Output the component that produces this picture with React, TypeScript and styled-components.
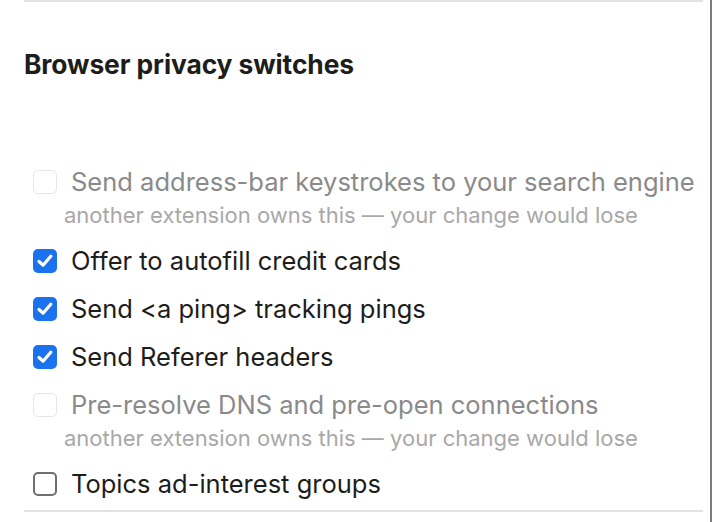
import React from "react";
import styled, { createGlobalStyle } from "styled-components";

const Global = createGlobalStyle`
  html, body { margin: 0; padding: 0; background: #ffffff; }
  body { font-family: Inter, "Noto Sans", sans-serif; color: #1d1d1b; }
`;

const Frame = styled.div`
  width: 712px;
  height: 522px;
  box-sizing: border-box;
  border-right: 2px solid #7b7b7b;
  padding: 0 7px 0 24px;
  overflow: hidden;
`;

const Section = styled.section`
  border-top: 2px solid #e3e3e0;
  border-bottom: 2px solid #e3e3e0;
  display: flex;
  flex-direction: column;
`;

const Heading = styled.h2`
  margin: 47px 0 0 0;
  font-size: 26.4px;
  line-height: 30px;
  font-weight: 700;
  letter-spacing: -0.1px;
`;

const List = styled.div`
  display: flex;
  flex-direction: column;
  margin-top: 79px;
  padding-bottom: 2px;
`;

const Item = styled.div`
  display: flex;
  flex-direction: column;
  padding: 4px 0;
`;

const Row = styled.label<{ $disabled?: boolean }>`
  display: flex;
  align-items: center;
  gap: 14px;
  padding-left: 9px;
  font-size: 25.5px;
  line-height: 40px;
  color: ${(p) => (p.$disabled ? "#8a8a8a" : "#1d1d1b")};
`;

const Box = styled.span<{ $checked?: boolean; $disabled?: boolean }>`
  width: 24px;
  height: 24px;
  box-sizing: border-box;
  border-radius: 5px;
  flex: none;
  display: flex;
  align-items: center;
  justify-content: center;
  background: ${(p) => (p.$checked ? "#1b72ee" : "#ffffff")};
  border: ${(p) =>
    p.$checked ? "none" : p.$disabled ? "1.5px solid #e6e6e6" : "2px solid #6f6f6f"};
`;

const Note = styled.div`
  padding-left: 40px;
  font-size: 22px;
  line-height: 28px;
  color: #a8a8a8;
  margin-top: -1px;
  padding-bottom: 4px;
`;

const Check = () => (
  <svg width="20" height="20" viewBox="0 0 20 20" fill="none">
    <path d="M4 10.5 L8 14.2 L15.8 5.2" stroke="#fff" strokeWidth="3.2" strokeLinecap="round" strokeLinejoin="round" />
  </svg>
);

type Opt = { label: string; checked?: boolean; disabled?: boolean };

const options: Opt[] = [
  { label: "Send address-bar keystrokes to your search engine", disabled: true },
  { label: "Offer to autofill credit cards", checked: true },
  { label: "Send <a ping> tracking pings", checked: true },
  { label: "Send Referer headers", checked: true },
  { label: "Pre-resolve DNS and pre-open connections", disabled: true },
  { label: "Topics ad-interest groups" },
];

export default function App() {
  return (
    <>
      <Global />
      <Frame>
        <Section>
          <Heading>Browser privacy switches</Heading>
          <List>
            {options.map((o) => (
              <Item key={o.label}>
                <Row $disabled={o.disabled}>
                  <Box $checked={o.checked} $disabled={o.disabled}>
                    {o.checked && <Check />}
                  </Box>
                  {o.label}
                </Row>
                {o.disabled && <Note>another extension owns this — your change would lose</Note>}
              </Item>
            ))}
          </List>
        </Section>
      </Frame>
    </>
  );
}
